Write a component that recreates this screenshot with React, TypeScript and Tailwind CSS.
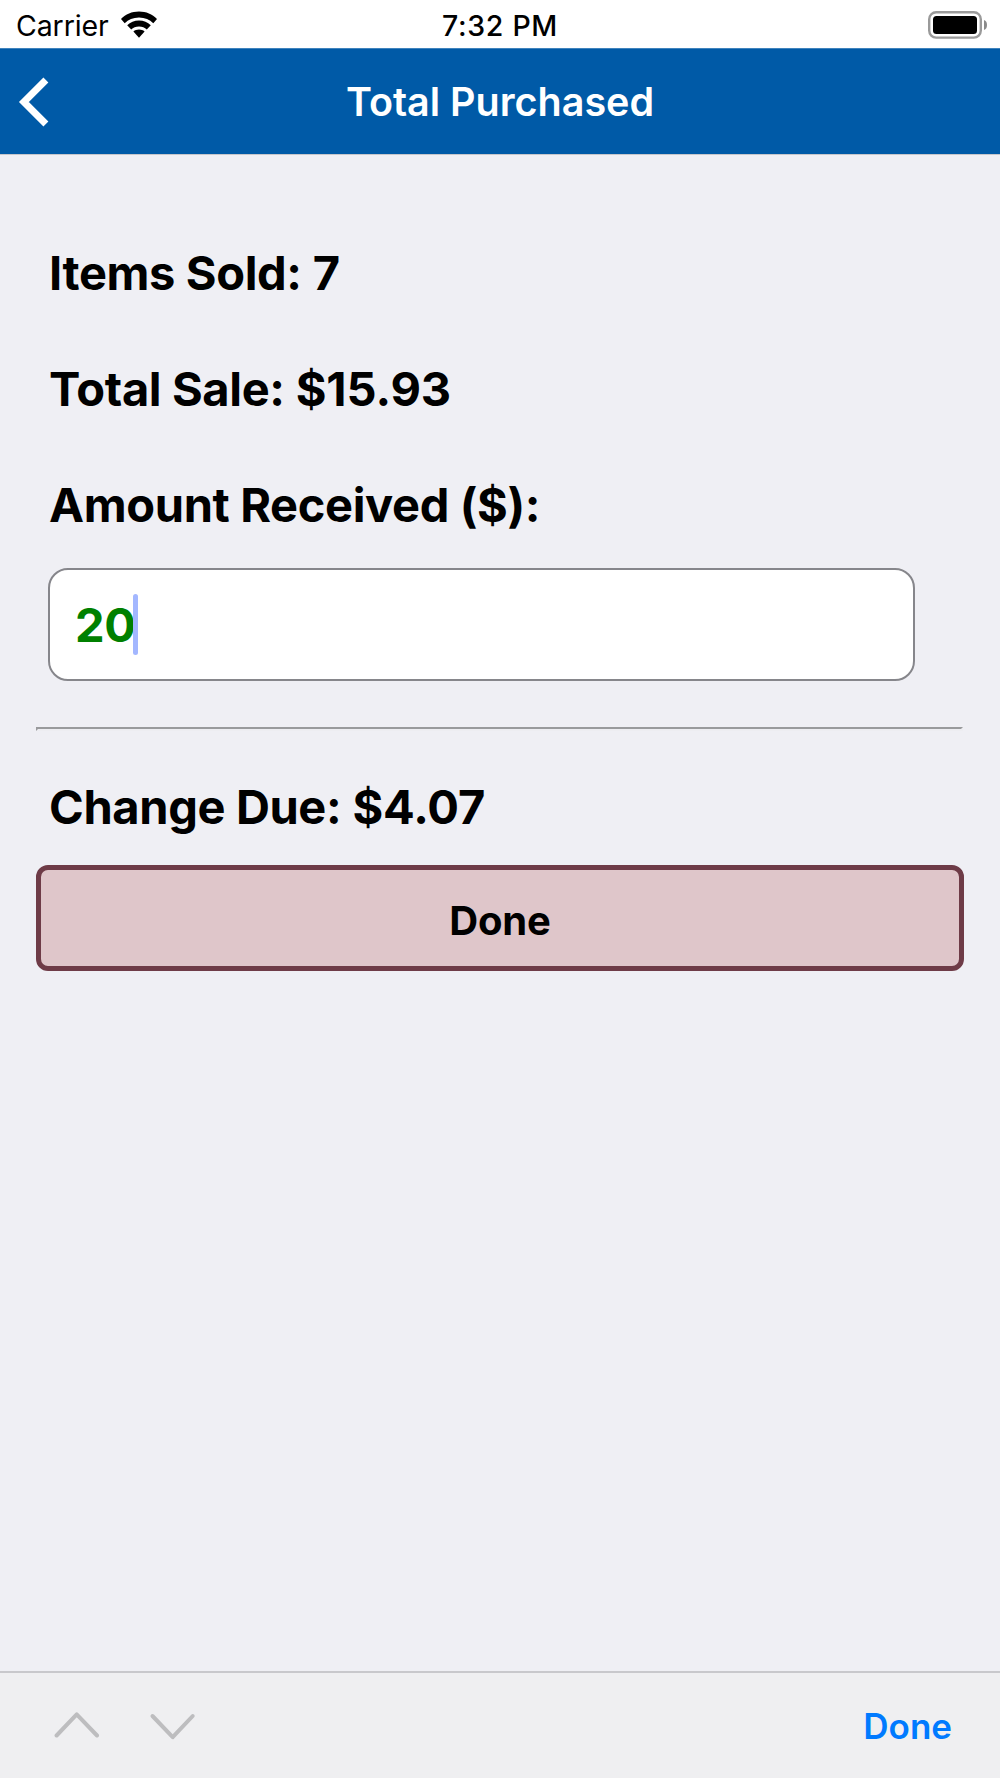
import { useState } from "react";

function WifiIcon() {
  return (
    <svg width="38" height="28" viewBox="0 0 38 28" className="ml-[11px]">
      <path
        d="M19 .6c7.200 0 13.300 2.800 18 7.300l-3.700 4.300C29.600 8.600 25 6.500 19 6.500S8.400 8.600 4.700 12.200L1 7.900C5.700 3.400 11.800.6 19 .6Z"
        fill="#000"
      />
      <path
        d="M19 9.500c4.700 0 8.600 1.700 11.800 4.700l-4 4.200C24.800 16.600 22.200 15.500 19 15.500s-5.800 1.100-7.800 2.900l-4-4.200C10.400 11.200 14.300 9.500 19 9.500Z"
        fill="#000"
      />
      <path
        d="M19 18.600c2.200 0 4 .7 5.600 1.900L19 26.800l-5.600-6.300c1.600-1.200 3.400-1.900 5.600-1.900Z"
        fill="#000"
      />
    </svg>
  );
}

function BatteryIcon() {
  return (
    <svg width="60" height="28" viewBox="0 0 60 28">
      <rect x="1.200" y="1.200" width="51.600" height="25.400" rx="7" fill="none" stroke="#9a9a9a" strokeWidth="2.400" />
      <rect x="5" y="5" width="44" height="18" rx="3.500" fill="#000" />
      <path d="M56 9c2 .6 3 2.600 3 5s-1 4.400-3 5V9Z" fill="#8a8a8a" />
    </svg>
  );
}

function StatusBar() {
  return (
    <div className="grid h-12 grid-cols-3 items-center bg-white text-[28.500px] leading-12">
      <div className="flex items-center pl-4">
        <span className="pt-0.5 tracking-[-0.1px]">Carrier</span>
        <WifiIcon />
      </div>
      <span className="pt-0.5 text-center font-medium tracking-[0.7px]">7:32 PM</span>
      <div className="flex justify-end pr-3">
        <BatteryIcon />
      </div>
    </div>
  );
}

function Header({ title }: { title: string }) {
  return (
    <header className="grid h-[106px] grid-cols-[100px_1fr_100px] items-center border-t border-t-[#3f83bd] bg-[#005aa7]">
      <button type="button" aria-label="Back" className="pl-[19px]">
        <svg width="29" height="48" viewBox="0 0 29 48" className="overflow-visible">
          <path d="M26.900 2 4.900 24l22 22" fill="none" stroke="#fff" strokeWidth="7" />
        </svg>
      </button>
      <h1 className="text-center text-[39.500px] leading-[50px] font-semibold text-white">{title}</h1>
    </header>
  );
}

function Row({ label, value }: { label: string; value?: string }) {
  return (
    <p className="ml-[13px] h-14 text-[47px] leading-14 font-bold tracking-[-0.36px] whitespace-pre">
      {label}
      {value && <span className="tracking-[-0.1px]"> {value}</span>}
    </p>
  );
}

function KeyboardBar() {
  return (
    <footer className="mt-auto flex h-[107px] items-center border-t-2 border-[#c8c8cc] bg-[#efeff1] pr-12 pl-[54px]">
      <svg width="142" height="30" viewBox="0 0 142 30" fill="none" stroke="#bdbdbf" strokeWidth="4" strokeLinecap="round" strokeLinejoin="round">
        <path d="M2.600 24.500 22.700 3.300l20.300 21.200" />
        <path d="M98.500 5l20.200 21.200 20-21.200" />
      </svg>
      <button type="button" className="ml-auto pt-0.5 text-[35px] font-semibold text-[#007aff]">
        Done
      </button>
    </footer>
  );
}

export default function App() {
  const [amount] = useState("20");
  const total = 15.93;
  const change = Number(amount) - total;

  return (
    <div className="flex h-[1778px] w-[1000px] flex-col overflow-hidden bg-[#efeff4] font-['Inter',sans-serif] text-black">
      <StatusBar />
      <Header title="Total Purchased" />
      <main className="flex flex-col border-t border-[#c6c6cb] px-9 pt-[90px]">
        <div className="flex flex-col gap-[60px]">
          <Row label="Items Sold:" value="7" />
          <Row label="Total Sale:" value={`$${total.toFixed(2)}`} />
          <Row label="Amount Received ($):" />
        </div>
        <div className="mt-[35px] ml-3 flex h-[113px] w-[867px] items-center rounded-[20px] border-2 border-[#86868b] bg-white pl-[25px]">
          <span className="pt-px text-[47px] leading-14 font-bold tracking-[-0.3px] text-[#008000]">{amount}</span>
          <span className="-ml-[3px] h-[61px] w-[5px] rounded-full bg-[#a3b7ff]" />
        </div>
        <hr className="mt-[46px] mr-px h-1 border-2 border-t-[#999a9c] border-r-[#ededf1] border-b-[#ededf1] border-l-[#999a9c]" />
        <div className="mt-12">
          <Row label="Change Due:" value={`$${change.toFixed(2)}`} />
        </div>
        <button
          type="button"
          className="mt-[30px] h-[106px] rounded-xl border-[5px] border-[#6e3b47] bg-[#dfc6ca] pt-1.5 text-[40px] leading-[50px] font-bold tracking-[-0.2px]"
        >
          Done
        </button>
      </main>
      <KeyboardBar />
    </div>
  );
}
